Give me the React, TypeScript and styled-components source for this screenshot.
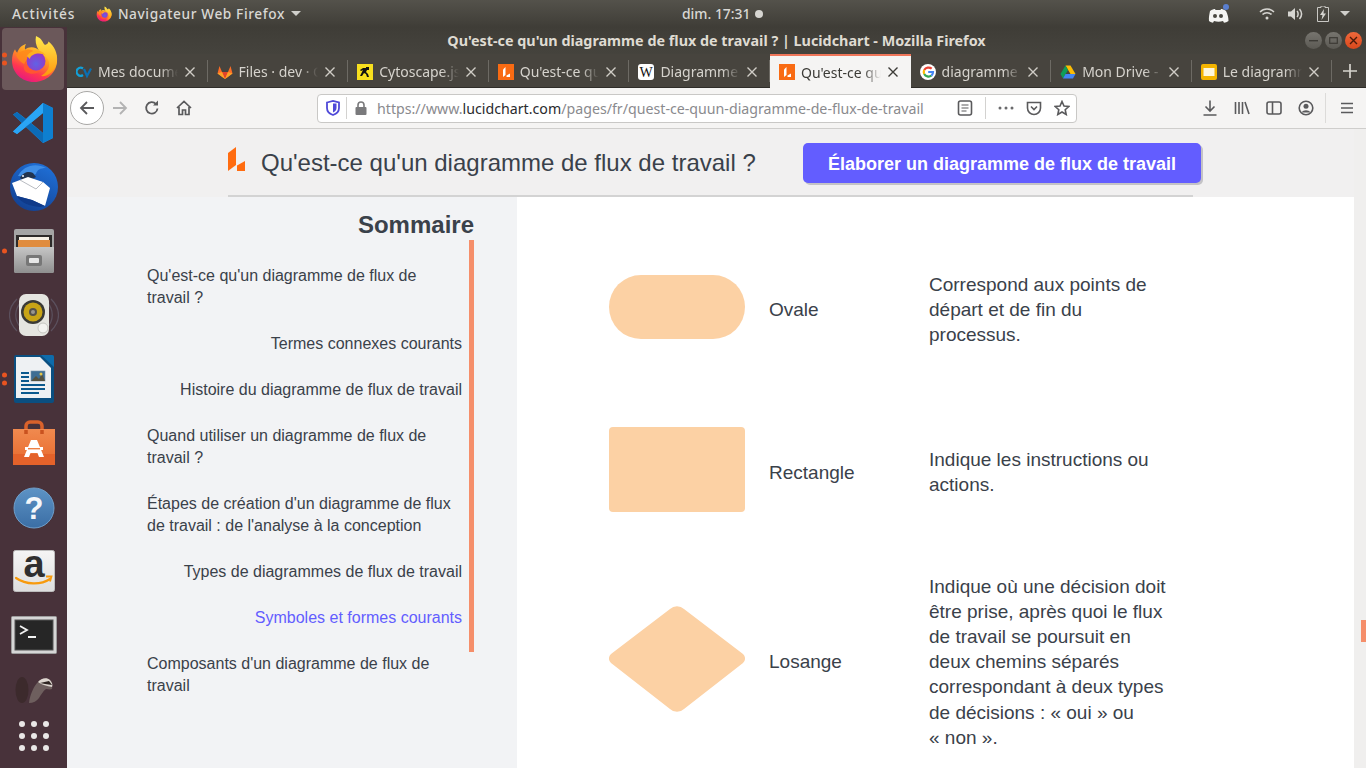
import React from "react";
import styled, { createGlobalStyle } from "styled-components";

const Global = createGlobalStyle`
  html, body { margin: 0; padding: 0; height: 768px; overflow: hidden; background: #48323a; }
  #root { width: 1366px; height: 768px; }
  * { box-sizing: border-box; }
`;

const CHROME = `"Noto Sans", "DejaVu Sans", sans-serif`;
const PAGE = `"Liberation Sans", Arial, sans-serif`;

const Screen = styled.div`
  width: 1366px; height: 768px; display: flex; flex-direction: column; overflow: hidden;
`;
const TopBar = styled.header`
  height: 27px; flex: none; display: flex; align-items: center; padding: 0 13px 0 12px;
  background: linear-gradient(#54524b, #3f3d37);
  color: #d9d8d4; font: 500 13.7px ${CHROME};
`;
const Activities = styled.span`width: 64px; flex: none; letter-spacing: 0.9px; white-space: nowrap;`;
const AppMenu = styled.div`
  display: flex; align-items: center; gap: 6px; margin-left: 20px; width: 205px; flex: none;
  letter-spacing: 0.6px; white-space: nowrap;
`;
const Caret = styled.span`
  width: 0; height: 0; border-left: 5px solid transparent; border-right: 5px solid transparent;
  border-top: 5px solid #d0cfcb; flex: none;
`;
const Clock = styled.div`
  margin-left: 381px; display: flex; align-items: center; gap: 5px; font-size: 13.9px;
`;
const ClockDot = styled.span`width: 8px; height: 8px; border-radius: 50%; background: #d6d5d1;`;
const Tray = styled.div`margin-left: auto; display: flex; align-items: center;`;
const TraySlot = styled.span<{ $w: number; $ml?: number }>`
  width: ${p => p.$w}px; margin-left: ${p => p.$ml ?? 0}px; display: flex; justify-content: center; align-items: center;
`;

const Desk = styled.div`flex: 1; display: flex; min-height: 0;`;
const Dock = styled.nav`
  width: 67px; flex: none; display: flex; flex-direction: column; background: #48323a; overflow: hidden;
`;
const DockSlot = styled.div<{ $active?: boolean; $h?: number }>`
  position: relative; height: ${p => p.$h ?? 64}px; flex: none; display: flex; align-items: center; justify-content: center;
  &::before {
    content: ""; position: absolute; left: 2px; top: 1px; width: 62px; height: 62px; border-radius: 4px;
    background: ${p => (p.$active ? "#6b585a" : "transparent")};
  }
  & > svg { position: relative; }
`;
const RunDots = styled.div`
  position: absolute; left: 2px; top: 50%; transform: translateY(-50%);
  display: flex; flex-direction: column; gap: 3px; z-index: 1;
`;
const RunDot = styled.span`width: 5px; height: 5px; border-radius: 50%; background: #e95420; display: block;`;

const Browser = styled.main`flex: 1; min-width: 0; display: flex; flex-direction: column;`;
const TitleBar = styled.div`
  height: 27px; flex: none; display: grid; grid-template-columns: 1fr auto 1fr; align-items: center;
  background: linear-gradient(#3f3d37, #45433d);
  color: #dfdbd2; font: 700 14.35px ${CHROME};
`;
const WindowButtons = styled.div`
  grid-column: 3; display: flex; justify-content: flex-end; padding-right: 3px;
`;
const WinBtn = styled.span<{ $close?: boolean }>`
  width: 17px; height: 17px; margin: 0 1.5px; border-radius: 50%; display: flex; align-items: center; justify-content: center;
  background: ${p => (p.$close ? "linear-gradient(#f0683b, #d9481c)" : "linear-gradient(#77756f, #5b5953)")};
`;
const TabStrip = styled.div`
  height: 34px; flex: none; display: flex; background: #47443e; border-bottom: 1px solid #2f2d29;
`;
const Tab = styled.div<{ $active?: boolean }>`
  width: 140.6px; flex: none; height: ${p => (p.$active ? 34 : 33)}px; position: relative; display: flex; align-items: center;
  padding: ${p => (p.$active ? 0 : 2)}px 12px 0 9px; gap: 6px;
  font: 400 14px ${CHROME};
  color: ${p => (p.$active ? "#3c3b37" : "#d6d3cd")};
  background: ${p => (p.$active ? "#f5f4f3" : "transparent")};
  border-top: ${p => (p.$active ? "2px solid #f0765a" : "none")};
  &::after {
    content: ""; position: absolute; right: 0; top: 6px; height: 22px; width: 1px;
    background: ${p => (p.$active ? "transparent" : "#6d6a64")};
  }
`;
const TabTitle = styled.span`
  flex: 1; min-width: 0; white-space: nowrap; overflow: hidden;
  -webkit-mask-image: linear-gradient(to right, #000 78%, transparent 100%);
  mask-image: linear-gradient(to right, #000 78%, transparent 100%);
`;
const CloseIcon = styled.svg`flex: none;`;
const NewTab = styled.div`flex: 1; display: flex; align-items: center; justify-content: center; padding-left: 2px;`;

const NavBar = styled.div`
  height: 41px; flex: none; display: flex; align-items: center; background: #f5f4f3;
  border-bottom: 1px solid #cfcecc; padding: 0 0 0 3px;
`;
const BackBtn = styled.span`
  width: 34px; height: 34px; border-radius: 50%; border: 1px solid #a9a8a6; background: #fff;
  display: flex; align-items: center; justify-content: center; flex: none;
`;
const NavSlot = styled.span<{ $w: number; $ml?: number }>`
  width: ${p => p.$w}px; margin-left: ${p => p.$ml ?? 0}px; flex: none; display: flex; align-items: center; justify-content: center;
`;
const UrlBox = styled.div`
  width: 760px; height: 29px; margin-left: 117px; flex: none; display: flex; align-items: center;
  background: #fff; border: 1px solid #c9c8c6; border-radius: 4px; padding: 0 6px 0 7px;
  font: 400 14.2px ${CHROME}; color: #8a8a8e;
`;
const UrlSep = styled.span`width: 1px; height: 22px; background: #d3d2d0; flex: none;`;
const UrlText = styled.div`flex: 1; white-space: nowrap; overflow: hidden; margin-left: 2px;`;
const UrlHost = styled.span`color: #2a2a2e;`;
const ToolSep = styled.span`width: 1px; height: 30px; background: #dcdbd9; flex: none;`;

const Page = styled.div`flex: 1; min-height: 0; display: flex; background: #f0efee;`;
const Content = styled.div`flex: 1; min-width: 0; display: flex; flex-direction: column; font-family: ${PAGE};`;
const Gutter = styled.div`width: 12px; flex: none; position: relative;`;
const GutterMark = styled.span`
  position: absolute; right: 0; top: 491px; width: 5px; height: 22px; background: #f58e6a;
`;
const PageHeader = styled.div`
  height: 68px; flex: none; background: #f1f0f0; padding-left: 161px;
`;
const HeaderInner = styled.div`
  width: 965px; height: 68px; border-bottom: 2px solid #d3d3d3; display: flex; align-items: flex-start;
  padding-top: 14px;
`;
const HeaderLogo = styled.span`width: 33px; flex: none; padding-top: 4px; display: flex;`;
const HeaderTitle = styled.h1`
  margin: 0; font: 400 24px/40px ${PAGE}; color: #3a414a; width: 542px; flex: none; white-space: nowrap;
`;
const Cta = styled.button`
  width: 398px; height: 40px; flex: none; border: 0; border-radius: 5px; background: #635dff; color: #fff;
  font: 700 18px ${PAGE}; box-shadow: 2px 2px 0 #c4c3c6; padding: 2px 0 0; margin-right: -236px;
`;
const Body = styled.div`flex: 1; min-height: 0; display: flex;`;
const Sidebar = styled.aside`
  width: 450px; flex: none; background: #f2f3f5; padding: 14px 43px 0 80px;
`;
const SideTitle = styled.h2`
  margin: 0; height: 29px; font: 700 24px/28px ${PAGE}; color: #3a414a; text-align: right;
`;
const TocList = styled.ul`
  position: relative; list-style: none; margin: 0; padding: 25px 12px 0 0; display: flex; flex-direction: column; gap: 24px;
`;
const TocProgress = styled.span`
  position: absolute; right: 0; top: 0; width: 5px; height: 412px; background: #f58e6a;
`;
const TocItem = styled.li`display: flex; justify-content: flex-end;`;
const TocLink = styled.span<{ $current?: boolean }>`
  max-width: 315px; font: 400 16px/22px ${PAGE}; color: ${p => (p.$current ? "#635dff" : "#3a414a")};
`;
const Main = styled.section`
  flex: 1; min-width: 0; background: #fff; padding: 75px 0 0 92px; overflow: hidden;
`;
const ShapeRow = styled.div<{ $mt: number; $h: number }>`
  display: grid; grid-template-columns: 136px 136px 240px; column-gap: 24px; align-items: center;
  margin-top: ${p => p.$mt}px; min-height: ${p => p.$h}px;
  color: #3a414a; font: 400 19px/25.2px ${PAGE};
`;
const ShapeCell = styled.div`display: flex; padding-bottom: 5px;`;
const Oval = styled.div`width: 136px; height: 64px; border-radius: 32px; background: #fcd1a4;`;
const Rect = styled.div`width: 136px; height: 85px; border-radius: 4px; background: #fcd1a4;`;
const Label = styled.div``;
const Desc = styled.p`margin: 0;`;

/* ---------- icons ---------- */
const Firefox = ({ s = 48 }: { s?: number }) => (
  <svg width={s} height={s} viewBox="0 0 48 48">
    <defs>
      <linearGradient id="ffa" x1="0.75" y1="0.05" x2="0.25" y2="1">
        <stop offset="0" stopColor="#ffd53d" />
        <stop offset="0.35" stopColor="#ff9a1f" />
        <stop offset="0.7" stopColor="#ff3750" />
        <stop offset="1" stopColor="#e31587" />
      </linearGradient>
      <linearGradient id="ffb" x1="0.5" y1="0" x2="0.5" y2="1">
        <stop offset="0" stopColor="#ffe94d" />
        <stop offset="1" stopColor="#ff980e" />
      </linearGradient>
      <radialGradient id="ffc" cx="0.5" cy="0.65" r="0.6">
        <stop offset="0" stopColor="#5f63e6" />
        <stop offset="1" stopColor="#9a35c4" />
      </radialGradient>
    </defs>
    <path d="M24 47C11.500 47 2 37.500 2 25.500c0-4.200 1-8 3-11.200 .5 1.500 1.200 2.600 2.200 3.400C8.600 13.400 12 10 16 9c-1.200 2.200-1.400 4-.8 5.500C19 11 26 11.500 30 16c6 0 15-1 16.400 4 .4 2 .6 3.800 .6 5.500C47 37.500 36.500 47 24 47z" fill="url(#ffa)" />
    <path d="M26 1c7 3 6 6.500 9 9 3-1 3-2 3.500-3.500C44 11 48 18 47 27 45 37 37 42 31 41c5-3 9-7 8-14-2-7-8-7-11-13-2-4-3-8-2-13z" fill="url(#ffb)" />
    <path d="M6 20c3-3 6-4 10-5 4-1 6 0 9 2-3 0-6 1-8 3-1 1-.5 2.500 1 3-2 2-2 5 0 7-6-1-10-5-12-10z" fill="#ff8a1a" opacity="0.85" />
    <circle cx="26" cy="26" r="9.500" fill="url(#ffc)" />
    <path d="M17 21c3-5 10-7 15-4 2 1 3 2 4 4-4-3-9-3-13-1-2 1-3 2-3 4-1-1-2.500-2-3-3z" fill="#ffb01f" />
    <path d="M16 26c1 7 7 11 14 10-3 3-9 4-14 1-3-2-3-8 0-11z" fill="#ff5a2e" opacity="0.9" />
  </svg>
);
const VsCode = () => (
  <svg width="44" height="44" viewBox="0 0 44 44">
    <path d="M31 2 41 7v30L31 42 14 26 5 33 1 30.500 10 22 1 13.500 5 11l9 7z" fill="#1f9cf0" />
    <path d="M31 2 41 7v30L31 42V2z" fill="#0e7fd0" />
    <path d="M31 12 19 22l12 10z" fill="#48323a" />
    <path d="M1 13.500 5 11 31 32 31 42z" fill="#0a66b0" opacity="0.9" />
    <path d="M1 30.500 5 33 31 12V2z" fill="#2aa5f5" />
  </svg>
);
const Thunderbird = () => (
  <svg width="50" height="50" viewBox="0 0 50 50">
    <defs>
      <linearGradient id="tb" x1="0.7" y1="0" x2="0.2" y2="1">
        <stop offset="0" stopColor="#1f6fd6" />
        <stop offset="1" stopColor="#123f90" />
      </linearGradient>
    </defs>
    <circle cx="25" cy="25" r="24" fill="url(#tb)" />
    <path d="M9 14C14 4 26 0 37 6c-6 0-9 2-10 6l-7 3z" fill="#3f8ee6" />
    <path d="M11 16c3-6 9-7 13-5l3 4-10 5z" fill="#22344f" />
    <path d="M3 21 19 15 34 20 41 26 36 44 23 38 8 34z" fill="#ffffff" />
    <path d="M11 18 27 27 34 20" fill="none" stroke="#b9bcc2" strokeWidth="1" />
    <path d="M8 34C12 41 20 44 31 45l5-1-13-6z" fill="#0f3a8a" />
    <circle cx="14" cy="14" r="1.100" fill="#e9eef5" />
  </svg>
);
const Files = () => (
  <svg width="42" height="46" viewBox="0 0 42 46">
    <defs>
      <linearGradient id="fg" x1="0" y1="0" x2="0" y2="1">
        <stop offset="0" stopColor="#c6c6c6" />
        <stop offset="1" stopColor="#8f8f8f" />
      </linearGradient>
    </defs>
    <rect x="1" y="1" width="40" height="44" rx="2" fill="#a5a5a5" />
    <rect x="3" y="7" width="36" height="12" fill="#2d2b2a" />
    <rect x="6" y="9" width="30" height="3" fill="#f7f1e6" />
    <rect x="5" y="12" width="32" height="7" fill="#e08c3e" />
    <path d="M1 19h40v24a2 2 0 0 1-2 2H3a2 2 0 0 1-2-2z" fill="url(#fg)" />
    <rect x="13" y="27" width="16" height="11" rx="2" fill="#777" />
    <rect x="16" y="30" width="10" height="5" rx="1" fill="#e7e7e7" />
  </svg>
);
const Rhythmbox = () => (
  <svg width="50" height="46" viewBox="0 0 50 46">
    <g fill="none" stroke="#7f8aa0" opacity="0.35" strokeWidth="1.200">
      <path d="M8 7C-2 17-2 29 8 39" />
      <path d="M42 7c10 10 10 22 0 32" />
      <path d="M12 10C5 18 5 28 12 36" />
      <path d="M38 10c7 8 7 18 0 26" />
    </g>
    <rect x="10" y="2" width="30" height="42" rx="7" fill="#e5e5e0" />
    <circle cx="24" cy="20" r="12" fill="#3a3a36" />
    <circle cx="24" cy="20" r="9.500" fill="#c8a416" />
    <circle cx="24" cy="20" r="4" fill="#55524a" />
    <circle cx="24" cy="20" r="2" fill="#9a978f" />
    <circle cx="34" cy="36" r="5" fill="#f3f3f0" stroke="#c5c5c0" />
  </svg>
);
const Writer = () => (
  <svg width="42" height="50" viewBox="0 0 42 50">
    <path d="M3 1h36a2 2 0 0 1 2 2v44a2 2 0 0 1-2 2H3a2 2 0 0 1-2-2V3a2 2 0 0 1 2-2z" fill="#0b4f80" />
    <path d="M28 1h11a2 2 0 0 1 2 2v10z" fill="#0e6cab" />
    <path d="M3 3h24l11 11v30H3z" fill="#eef1f3" />
    <g fill="#0b5a8e">
      <rect x="8" y="18" width="8" height="2" /><rect x="8" y="22" width="8" height="2" /><rect x="8" y="26" width="8" height="2" />
      <rect x="8" y="30" width="24" height="2" /><rect x="8" y="34" width="24" height="2" /><rect x="8" y="38" width="18" height="2" />
    </g>
    <rect x="18" y="17" width="14" height="10" fill="#3e6e93" stroke="#7b95aa" strokeWidth="0.6" />
    <path d="M18 27l5-5 3 3 3-5 3 7z" fill="#55523f" />
    <circle cx="28" cy="20" r="1.500" fill="#e3c64a" />
  </svg>
);
const Store = () => (
  <svg width="44" height="46" viewBox="0 0 44 46">
    <defs>
      <linearGradient id="st" x1="0" y1="0" x2="0" y2="1">
        <stop offset="0" stopColor="#f08a4f" />
        <stop offset="1" stopColor="#e8692c" />
      </linearGradient>
    </defs>
    <path d="M14 14V6a4 4 0 0 1 4-4h8a4 4 0 0 1 4 4v8" fill="none" stroke="#d9622b" strokeWidth="3.500" />
    <path d="M1 9h42v36H1z" fill="url(#st)" />
    <path d="M1 34h42v11H1z" fill="#e4622a" />
    <path d="M14 14V10M30 14V10" stroke="#c9521f" strokeWidth="3.500" />
    <path d="M19 20h6l7 17h-5l-1.500-4h-7L17 37h-5z" fill="#fff" />
    <rect x="13" y="27" width="18" height="3" fill="#fff" />
    <rect x="16" y="28" width="12" height="1.400" fill="#ee7f45" />
  </svg>
);
const HelpMark = styled.text`font: 700 31px ${PAGE}; fill: #f4f7fa;`;
const Help = () => (
  <svg width="42" height="44" viewBox="0 -2 42 44">
    <defs>
      <linearGradient id="hp" x1="0" y1="0" x2="0" y2="1">
        <stop offset="0" stopColor="#5d93c5" />
        <stop offset="1" stopColor="#3b6ea5" />
      </linearGradient>
    </defs>
    <circle cx="21" cy="21" r="20" fill="url(#hp)" stroke="#6f9ec9" />
    <HelpMark x="21" y="32" textAnchor="middle">?</HelpMark>
  </svg>
);
const AmazonMark = styled.text`font: 700 38px ${PAGE}; fill: #2f2f2f;`;
const Amazon = () => (
  <svg width="42" height="42" viewBox="0 0 42 42">
    <defs>
      <linearGradient id="az" x1="0" y1="0" x2="0" y2="1">
        <stop offset="0" stopColor="#f5f5f5" />
        <stop offset="1" stopColor="#dedede" />
      </linearGradient>
    </defs>
    <rect x="0.500" y="0.500" width="41" height="41" rx="2" fill="url(#az)" stroke="#bdbdbd" />
    <AmazonMark x="21" y="27" textAnchor="middle">a</AmazonMark>
    <path d="M3 28c10 7 25 7 34 1" fill="none" stroke="#f79a0d" strokeWidth="2.200" strokeLinecap="round" />
    <path d="M33 26.500l5.500 0-1.500 5" fill="none" stroke="#f79a0d" strokeWidth="1.800" />
  </svg>
);
const Terminal = () => (
  <svg width="46" height="38" viewBox="0 0 46 38">
    <rect x="0.500" y="0.500" width="45" height="37" rx="1" fill="#d6d6d6" stroke="#9d9d9d" />
    <rect x="4" y="4" width="38" height="30" fill="#262626" stroke="#555" />
    <path d="M9 10l7 4-7 4" fill="none" stroke="#f2f2f2" strokeWidth="1.800" />
    <rect x="17" y="20" width="8" height="2" fill="#f2f2f2" />
  </svg>
);
const Beaver = () => (
  <svg width="40" height="28" viewBox="0 0 40 28">
    <ellipse cx="8" cy="14" rx="6.500" ry="13" fill="#3c2a2c" />
    <path d="M15 27c1-8 4-15 8-20 4-4 9-6 12-3 2 3 4 6 3 9-2 1-4 0-6 0-3 2-5 6-7 9-2 3-6 5-10 5z" fill="#6e5f5e" />
    <path d="M24 6c3-4 9-5 12-2 2 2 3 5 2 7-5-1-10-2-14-5z" fill="#dcd5ce" />
    <path d="M26 7l9-2 3 4-7-1z" fill="#2e2421" />
  </svg>
);
const DotGrid = () => (
  <svg width="32" height="32" viewBox="0 0 32 32">
    {[4, 16, 28].flatMap(y => [4, 16, 28].map(x => <circle key={`${x}-${y}`} cx={x} cy={y} r="3" fill="#e9e7e6" />))}
  </svg>
);

const CvIcon = () => (
  <svg width="16" height="16" viewBox="0 0 16 16" fill="none" strokeWidth="2.200">
    <path d="M7 4.500A4 4 0 1 0 7 11" stroke="#12a0d7" />
    <path d="M8 5l3 7 4-7.500" stroke="#0b6fb3" />
  </svg>
);
const GitlabIcon = () => (
  <svg width="16" height="16" viewBox="0 0 16 16">
    <path d="M8 15 .5 9.500 2.500 2 5 8h6l2.500-6 2 7.500z" fill="#fc6d26" />
    <path d="M8 15 5 8h6z" fill="#e24329" />
    <path d="M.5 9.500 5 8l3 7z" fill="#fca326" />
    <path d="M15.500 9.500 11 8l-3 7z" fill="#fca326" />
  </svg>
);
const CytoIcon = () => (
  <svg width="16" height="16" viewBox="0 0 16 16">
    <rect width="16" height="16" fill="#f7df1e" />
    <path d="M9 3h3v3h-2l-1 2 2 2 1 3h-2l-1-3-2-1-2 3H3l2-4 1-2-2 1-1-1 3-2h3z" fill="#111" />
  </svg>
);
const LucidTab = () => (
  <svg width="16" height="16" viewBox="0 0 16 16">
    <rect width="16" height="16" fill="#f96b13" />
    <path d="M5 5.500 7.500 3v8L5 13z" fill="#fff" />
    <path d="M8.500 13v-1.500L12 9.500V13z" fill="#fff" />
  </svg>
);
const WikiGlyph = styled.text`font: 400 14px "Liberation Serif", serif; fill: #111;`;
const WikiIcon = () => (
  <svg width="16" height="16" viewBox="0 0 16 16">
    <rect width="16" height="16" rx="3" fill="#fff" />
    <WikiGlyph x="8" y="13" textAnchor="middle">W</WikiGlyph>
  </svg>
);
const GoogleIcon = () => (
  <svg width="16" height="16" viewBox="0 0 16 16">
    <circle cx="8" cy="8" r="8" fill="#fff" />
    <g fill="none" strokeWidth="2.200">
      <path d="M11.700 4.700A5 5 0 0 0 4.200 6" stroke="#ea4335" />
      <path d="M4.200 6a5 5 0 0 0 0 4" stroke="#fbbc05" />
      <path d="M4.200 10a5 5 0 0 0 7.200 1.700" stroke="#34a853" />
      <path d="M11.400 11.700A5 5 0 0 0 13 8H8.200" stroke="#4285f4" />
    </g>
  </svg>
);
const DriveIcon = () => (
  <svg width="16" height="16" viewBox="0 0 16 16">
    <path d="M5.500 1.500h5l5 8.500h-5z" fill="#fbbc04" />
    <path d="M5.500 1.500 8 6l-5 8.500L.5 10z" fill="#0f9d58" />
    <path d="M5.500 10h10L13 14.500H3z" fill="#4285f4" />
  </svg>
);
const SlidesIcon = () => (
  <svg width="16" height="16" viewBox="0 0 16 16">
    <rect width="16" height="16" rx="2" fill="#f4b400" />
    <rect x="2.500" y="4" width="11" height="8" fill="#fdf6dd" />
  </svg>
);
const X = ({ c = "#d0cdc7" }: { c?: string }) => (
  <CloseIcon width="12" height="12" viewBox="0 0 12 12">
    <path d="M1.500 1.500l9 9M10.500 1.500l-9 9" stroke={c} strokeWidth="1.400" fill="none" />
  </CloseIcon>
);

const G = { fill: "none", stroke: "#5a5a5c", strokeWidth: 1.6 } as const;
const I = ({ children, w = 18, h = 18, vb }: { children: React.ReactNode; w?: number; h?: number; vb?: string }) => (
  <svg width={w} height={h} viewBox={vb ?? `0 0 ${w} ${h}`}>{children}</svg>
);

const tabs: { icon: React.ReactNode; title: string; active?: boolean }[] = [
  { icon: <CvIcon />, title: "Mes documents - Cacoo" },
  { icon: <GitlabIcon />, title: "Files · dev · GitLab" },
  { icon: <CytoIcon />, title: "Cytoscape.js" },
  { icon: <LucidTab />, title: "Qu'est-ce qu'un diagramme" },
  { icon: <WikiIcon />, title: "Diagramme de flux" },
  { icon: <LucidTab />, title: "Qu'est-ce qu'un diagramme", active: true },
  { icon: <GoogleIcon />, title: "diagramme de flux" },
  { icon: <DriveIcon />, title: "Mon Drive - Google" },
  { icon: <SlidesIcon />, title: "Le diagramme de flux" },
];

const toc: { label: string; current?: boolean }[] = [
  { label: "Qu'est-ce qu'un diagramme de flux de travail ?" },
  { label: "Termes connexes courants" },
  { label: "Histoire du diagramme de flux de travail" },
  { label: "Quand utiliser un diagramme de flux de travail ?" },
  { label: "Étapes de création d'un diagramme de flux de travail : de l'analyse à la conception" },
  { label: "Types de diagrammes de flux de travail" },
  { label: "Symboles et formes courants", current: true },
  { label: "Composants d'un diagramme de flux de travail" },
];

export default function App() {
  return (
    <Screen>
      <Global />
      <TopBar>
        <Activities>Activités</Activities>
        <AppMenu>
          <Firefox s={16} />
          <span>Navigateur Web Firefox</span>
          <Caret />
        </AppMenu>
        <Clock>
          <span>dim. 17:31</span>
          <ClockDot />
        </Clock>
        <Tray>
          <TraySlot $w={24}>
            <svg width="24" height="20" viewBox="0 0 24 20">
              <path d="M4 7c2-1.500 4-2 5-2l.5 1h5l.5-1c1 0 3 .5 5 2 1.500 3 2.500 6 2.500 10-1.500 1-3 1.500-4.500 1.800l-1-1.800c-3 1-6 1-9 0l-1 1.800C6 18.500 4.500 18 3 17c-.5-4 .5-7 1-10z" fill="#f5f5f3" />
              <circle cx="9" cy="12" r="2" fill="#4a4842" />
              <circle cx="15" cy="12" r="2" fill="#4a4842" />
              <circle cx="20" cy="3" r="3" fill="#5a7fd0" />
            </svg>
          </TraySlot>
          <TraySlot $w={28} $ml={23}>
            <svg width="16" height="14" viewBox="0 0 16 14" fill="none" stroke="#d6d5d1" strokeWidth="1.500">
              <path d="M1 5c4-4 10-4 14 0" />
              <path d="M3.500 7.500c2.500-2.500 6.500-2.500 9 0" />
              <circle cx="8" cy="11" r="1.500" fill="#d6d5d1" stroke="none" />
            </svg>
          </TraySlot>
          <TraySlot $w={28}>
            <svg width="16" height="14" viewBox="0 0 16 14">
              <path d="M1 4.500h3L8 1v12L4 9.500H1z" fill="#d6d5d1" />
              <path d="M10 4c1.500 1.500 1.500 4.500 0 6M12.500 2c2.500 3 2.500 7 0 10" fill="none" stroke="#d6d5d1" strokeWidth="1.500" />
            </svg>
          </TraySlot>
          <TraySlot $w={28}>
            <svg width="12" height="16" viewBox="0 0 12 16">
              <path d="M4 0h4v1.500h3.500v14H.5v-14H4z" fill="none" stroke="#c9c8c4" />
              <path d="M7 3 3 9h2.500L4.500 14 9 7.500H6.500z" fill="#d6d5d1" />
            </svg>
          </TraySlot>
          <TraySlot $w={16}><Caret /></TraySlot>
        </Tray>
      </TopBar>
      <Desk>
        <Dock>
          <DockSlot $active>
            <RunDots><RunDot /><RunDot /></RunDots>
            <Firefox />
          </DockSlot>
          <DockSlot><VsCode /></DockSlot>
          <DockSlot><Thunderbird /></DockSlot>
          <DockSlot><RunDots><RunDot /></RunDots><Files /></DockSlot>
          <DockSlot><Rhythmbox /></DockSlot>
          <DockSlot><RunDots><RunDot /><RunDot /></RunDots><Writer /></DockSlot>
          <DockSlot><Store /></DockSlot>
          <DockSlot><Help /></DockSlot>
          <DockSlot><Amazon /></DockSlot>
          <DockSlot><Terminal /></DockSlot>
          <DockSlot $h={46}><Beaver /></DockSlot>
          <DockSlot $h={46}><DotGrid /></DockSlot>
        </Dock>
        <Browser>
          <TitleBar>
            <span />
            <span>Qu'est-ce qu'un diagramme de flux de travail ? | Lucidchart - Mozilla Firefox</span>
            <WindowButtons>
              <WinBtn>
                <svg width="9" height="9" viewBox="0 0 9 9"><rect x="0" y="4" width="9" height="1.400" fill="#3d3b36" /></svg>
              </WinBtn>
              <WinBtn>
                <svg width="9" height="9" viewBox="0 0 9 9"><rect x="0.700" y="1.700" width="7.600" height="5.600" fill="none" stroke="#3d3b36" strokeWidth="1.200" /></svg>
              </WinBtn>
              <WinBtn $close>
                <svg width="9" height="9" viewBox="0 0 9 9"><path d="M1 1l7 7M8 1l-7 7" stroke="#4a1a0a" strokeWidth="1.400" /></svg>
              </WinBtn>
            </WindowButtons>
          </TitleBar>
          <TabStrip>
            {tabs.map((t, i) => (
              <Tab key={i} $active={t.active}>
                {t.icon}
                <TabTitle>{t.title}</TabTitle>
                <X c={t.active ? "#3c3b37" : "#d0cdc7"} />
              </Tab>
            ))}
            <NewTab>
              <svg width="16" height="16" viewBox="0 0 16 16"><path d="M8 1v14M1 8h14" stroke="#d6d3cd" strokeWidth="1.700" /></svg>
            </NewTab>
          </TabStrip>
          <NavBar>
            <BackBtn>
              <I><path d="M16 9H3M9 3 3 9l6 6" {...G} strokeWidth={1.800} /></I>
            </BackBtn>
            <NavSlot $w={32}>
              <I><path d="M2 9h13M9 3l6 6-6 6" {...G} stroke="#b3b3b3" strokeWidth={1.800} /></I>
            </NavSlot>
            <NavSlot $w={32}>
              <I vb="0 0 18 18"><path d="M14.500 9.500A5.700 5.700 0 1 1 13 5" {...G} strokeWidth={1.800} /><path d="M15 1.500V6.500H10z" fill="#5a5a5c" /></I>
            </NavSlot>
            <NavSlot $w={32}>
              <I><path d="M2 9 9 2.500 16 9M4 8v7.500h3.500V11h3v4.500H14V8" {...G} strokeWidth={1.700} /></I>
            </NavSlot>
            <UrlBox>
              <NavSlot $w={16}>
                <svg width="14" height="16" viewBox="0 0 14 16">
                  <path d="M1 2.500 7 1l6 1.500V8c0 3.500-3 6-6 7-3-1-6-3.500-6-7z" fill="#fff" stroke="#4f49d8" strokeWidth="1.800" />
                  <path d="M7 3.500h3.500V8c0 2-1.500 3.500-3.500 4.500z" fill="#4f49d8" />
                </svg>
              </NavSlot>
              <NavSlot $w={5} />
              <UrlSep />
              <NavSlot $w={28}>
                <svg width="12" height="14" viewBox="0 0 12 14">
                  <path d="M3 6V4a3 3 0 0 1 6 0v2" fill="none" stroke="#7a7a7c" strokeWidth="1.600" />
                  <rect x="0.500" y="6" width="11" height="8" rx="1" fill="#7a7a7c" />
                </svg>
              </NavSlot>
              <UrlText>
                https://www.<UrlHost>lucidchart.com</UrlHost>/pages/fr/quest-ce-quun-diagramme-de-flux-de-travail
              </UrlText>
              <NavSlot $w={16}>
                <I w={16} h={16}><rect x="1.500" y="1" width="13" height="14" rx="2" {...G} /><path d="M4.500 5h7M4.500 8h7M4.500 11h5" {...G} strokeWidth={1.200} /></I>
              </NavSlot>
              <NavSlot $w={12} />
              <UrlSep />
              <NavSlot $w={40}>
                <I w={18} h={6}><circle cx="3" cy="3" r="1.500" fill="#6a6a6c" /><circle cx="9" cy="3" r="1.500" fill="#6a6a6c" /><circle cx="15" cy="3" r="1.500" fill="#6a6a6c" /></I>
              </NavSlot>
              <NavSlot $w={16}>
                <I w={16} h={15}><path d="M1.500 1.500h13V7A6.500 6.500 0 0 1 1.500 7z" {...G} /><path d="M5 5.500l3 3 3-3" {...G} /></I>
              </NavSlot>
              <NavSlot $w={12} />
              <NavSlot $w={16}>
                <I w={16} h={16}><path d="M8 1.500l2 4.500 4.800.5-3.600 3.200 1 4.800L8 12l-4.200 2.500 1-4.800L1.200 6.500 6 6z" {...G} /></I>
              </NavSlot>
            </UrlBox>
            <NavSlot $w={18} $ml={124}>
              <I><path d="M9 1.500v10M4.500 7.500 9 12l4.500-4.500M2.500 16h13" {...G} /></I>
            </NavSlot>
            <NavSlot $w={18} $ml={14}>
              <I><path d="M2.500 3v12M6 3v12M9.500 3v12M12 3l4 12" {...G} /></I>
            </NavSlot>
            <NavSlot $w={18} $ml={14}>
              <I w={16} h={14}><rect x="1" y="1" width="14" height="12" rx="2" {...G} /><path d="M6.500 1v12" {...G} /></I>
            </NavSlot>
            <NavSlot $w={18} $ml={14}>
              <I w={16} h={16}><circle cx="8" cy="8" r="6.800" {...G} /><circle cx="8" cy="6.200" r="2.500" fill="#5a5a5c" /><path d="M3.500 12.500c2-3 7-3 9 0" fill="#5a5a5c" /></I>
            </NavSlot>
            <NavSlot $w={1} $ml={10}><ToolSep /></NavSlot>
            <NavSlot $w={14} $ml={14}>
              <I w={14} h={12}><path d="M1 1.500h12M1 6h12M1 10.500h12" {...G} strokeWidth={1.700} /></I>
            </NavSlot>
          </NavBar>
          <Page>
            <Content>
              <PageHeader>
                <HeaderInner>
                  <HeaderLogo>
                    <svg width="18" height="24" viewBox="0 0 18 24">
                      <path d="M0 6 8 0v18l-8 6z" fill="#ff6c10" />
                      <path d="M9 24v-5.500L17 14v10z" fill="#ff6c10" />
                    </svg>
                  </HeaderLogo>
                  <HeaderTitle>Qu'est-ce qu'un diagramme de flux de travail ?</HeaderTitle>
                  <Cta>Élaborer un diagramme de flux de travail</Cta>
                </HeaderInner>
              </PageHeader>
              <Body>
                <Sidebar>
                  <SideTitle>Sommaire</SideTitle>
                  <TocList>
                    <TocProgress />
                    {toc.map(t => (
                      <TocItem key={t.label}>
                        <TocLink $current={t.current}>{t.label}</TocLink>
                      </TocItem>
                    ))}
                  </TocList>
                </Sidebar>
                <Main>
                  <ShapeRow $mt={0} $h={75}>
                    <ShapeCell><Oval /></ShapeCell>
                    <Label>Ovale</Label>
                    <Desc>Correspond aux points de départ et de fin du processus.</Desc>
                  </ShapeRow>
                  <ShapeRow $mt={79} $h={91}>
                    <ShapeCell><Rect /></ShapeCell>
                    <Label>Rectangle</Label>
                    <Desc>Indique les instructions ou actions.</Desc>
                  </ShapeRow>
                  <ShapeRow $mt={56} $h={176}>
                    <ShapeCell>
                      <svg width="136" height="106" viewBox="0 0 136 106">
                        <path d="M61 3a10 10 0 0 1 14 0l59 45a6 6 0 0 1 0 9l-59 46a10 10 0 0 1-14 0L2 57a6 6 0 0 1 0-9z" fill="#fcd1a4" />
                      </svg>
                    </ShapeCell>
                    <Label>Losange</Label>
                    <Desc>Indique où une décision doit être prise, après quoi le flux de travail se poursuit en deux chemins séparés correspondant à deux types de décisions : «&nbsp;oui&nbsp;» ou «&nbsp;non&nbsp;».</Desc>
                  </ShapeRow>
                </Main>
              </Body>
            </Content>
            <Gutter><GutterMark /></Gutter>
          </Page>
        </Browser>
      </Desk>
    </Screen>
  );
}
